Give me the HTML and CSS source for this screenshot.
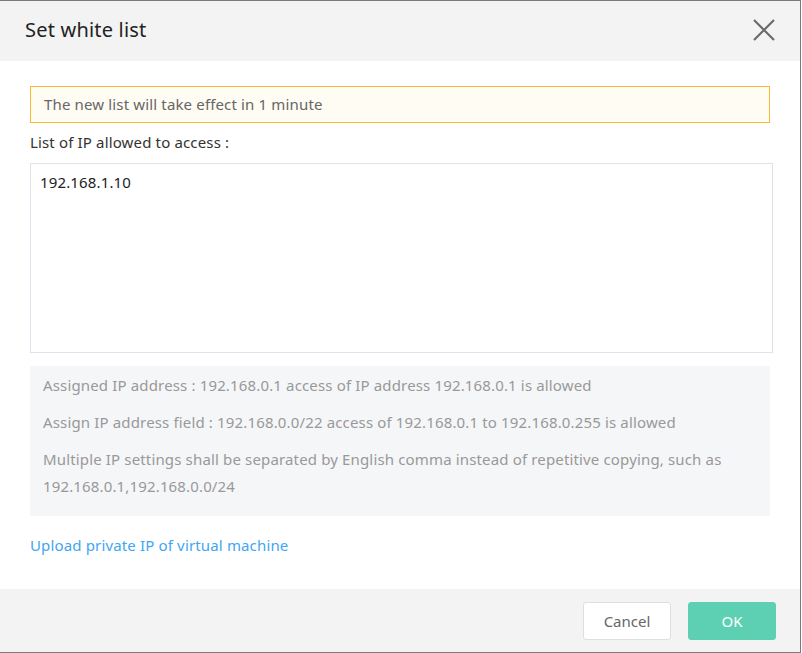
FILE: index.html
```html
<!DOCTYPE html>
<html>
<head>
<meta charset="utf-8">
<link rel="stylesheet" href="styles.css">
</head>
<body>
<div class="dialog">
  <div class="header">
    <span class="title">Set white list</span>
    <span class="close"><svg width="22" height="22" viewBox="0 0 22 22"><path d="M1 1L21 21M21 1L1 21" stroke="#6b6b6b" stroke-width="2.2" fill="none"/></svg></span>
  </div>
  <div class="body">
    <div class="notice">The new list will take effect in 1 minute</div>
    <div class="label">List of IP allowed to access :</div>
    <div class="textarea">192.168.1.10</div>
    <div class="help">
      <p>Assigned IP address : 192.168.0.1 access of IP address 192.168.0.1 is allowed</p>
      <p>Assign IP address field : 192.168.0.0/22 access of 192.168.0.1 to 192.168.0.255 is allowed</p>
      <p>Multiple IP settings shall be separated by English comma instead of repetitive copying, such as 192.168.0.1,192.168.0.0/24</p>
    </div>
    <a class="link">Upload private IP of virtual machine</a>
  </div>
  <div class="footer">
    <button class="btn cancel">Cancel</button>
    <button class="btn ok">OK</button>
  </div>
</div>
</body>
</html>
```

FILE: styles.css
```css
html, body {
  margin: 0;
  padding: 0;
  background: #ffffff;
}
.dialog {
  width: 800px;
  height: 651px;
  border-top: 1px solid #7a7a7a;
  border-right: 1px solid #7a7a7a;
  border-bottom: 1px solid #7a7a7a;
  font-family: "Noto Sans", "Open Sans", sans-serif;
  display: flex;
  flex-direction: column;
  background: #fff;
}
.header {
  box-sizing: border-box;
  height: 60px;
  background: #f3f3f3;
  display: flex;
  align-items: center;
  justify-content: space-between;
  padding: 0 25px 3px 25px;
}
.title {
  font-size: 20px;
  letter-spacing: 0.2px;
  color: #222;
}
.close {
  display: flex;
  width: 22px;
  height: 22px;
}
.body {
  flex: 1;
  padding: 25px 27px 0 30px;
  display: flex;
  flex-direction: column;
  align-items: flex-start;
  font-size: 15px;
  letter-spacing: 0.15px;
}
.notice {
  box-sizing: border-box;
  width: 740px;
  height: 37px;
  border: 1px solid #f8b932;
  background: #fffcf4;
  color: #666;
  line-height: 35px;
  padding-left: 13px;
}
.label {
  margin-top: 8px;
  line-height: 22px;
  color: #333;
}
.textarea {
  box-sizing: border-box;
  margin-top: 10px;
  width: 743px;
  height: 190px;
  border: 1px solid #dde3ea;
  padding: 8px 9px;
  line-height: 20px;
  color: #222;
}
.help {
  box-sizing: border-box;
  margin-top: 13px;
  width: 740px;
  background: #f5f6f8;
  padding: 6px 13px 16px 13px;
  color: #999;
}
.help p {
  margin: 0 0 10px 0;
  line-height: 27px;
}
.help p:last-child {
  margin-bottom: 0;
}
.link {
  margin-top: 18px;
  line-height: 22px;
  color: #3fa6f2;
  cursor: pointer;
}
.footer {
  height: 63px;
  background: #f3f3f3;
  display: flex;
  align-items: center;
  justify-content: flex-end;
  gap: 17px;
  padding-right: 24px;
}
.btn {
  width: 88px;
  height: 38px;
  border-radius: 3px;
  font-family: "Noto Sans", "Open Sans", sans-serif;
  font-size: 15px;
  cursor: pointer;
}
.cancel {
  background: #fff;
  border: 1px solid #dcdfe3;
  color: #666;
}
.ok {
  background: #5dd0b4;
  border: 1px solid #5dd0b4;
  color: #fff;
}
```
